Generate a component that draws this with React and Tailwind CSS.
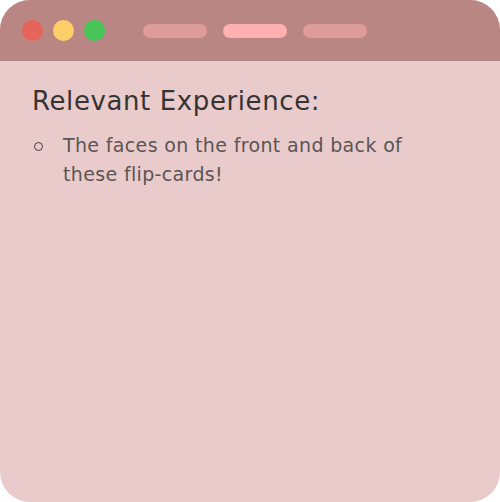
export default function App() {
  return (
    <div className="h-[502px] w-[500px] bg-white" style={{ fontFamily: '"DejaVu Sans", "Noto Sans", sans-serif' }}>
      <div className="flex h-full w-full flex-col overflow-hidden rounded-[30px] bg-[#eacbcc]">
        <div className="flex h-[61px] shrink-0 items-center bg-[#b98683] pl-[22px]">
          <div className="flex gap-[10px]">
            <span className="h-[21px] w-[21px] rounded-full bg-[#e6655b]" />
            <span className="h-[21px] w-[21px] rounded-full bg-[#fdcd68]" />
            <span className="h-[21px] w-[21px] rounded-full bg-[#47c457]" />
          </div>
          <div className="ml-[38px] flex gap-4">
            <span className="h-[14px] w-16 rounded-full bg-[#de9b9b]" />
            <span className="h-[14px] w-16 rounded-full bg-[#ffb0b0]" />
            <span className="h-[14px] w-16 rounded-full bg-[#de9b9b]" />
          </div>
        </div>
        <div className="px-[32px] pt-[22px]">
          <h2 className="text-[26px] leading-[36px] font-normal tracking-[0.6px] text-[#363433]">Relevant Experience:</h2>
          <ul className="mt-[12px]">
            <li className="flex">
              <span className="mt-[11px] ml-[2px] h-[9px] w-[9px] shrink-0 rounded-full border border-[#3f3d3c]" />
              <span className="ml-[20px] w-[370px] text-[19px] leading-[29px] font-normal tracking-[0.35px] text-[#5a5553]">
                The faces on the front and back of these flip-cards!
              </span>
            </li>
          </ul>
        </div>
      </div>
    </div>
  )
}
